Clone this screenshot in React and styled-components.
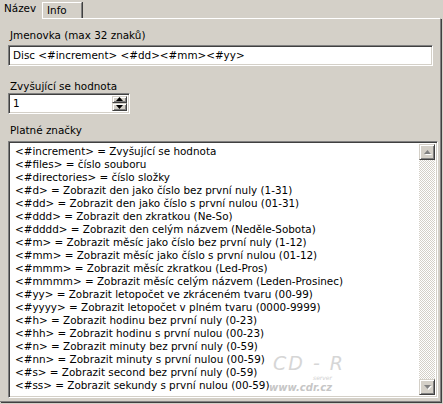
import React from "react";
import styled, { createGlobalStyle } from "styled-components";

const Global = createGlobalStyle`
  html, body { margin: 0; padding: 0; background: #d4d0c8; }
  body { font-family: Tahoma, "DejaVu Sans", sans-serif; font-size: 10.4px; color: #000; }
`;

const Window = styled.div`
  width: 443px;
  height: 404px;
  background: #d4d0c8;
  display: flex;
  flex-direction: column;
  overflow: hidden;
`;

const TabStrip = styled.div`
  display: flex;
  align-items: flex-end;
  height: 18px;
  flex: none;
  position: relative;
  z-index: 1;
`;

const Tab = styled.div`
  box-sizing: border-box;
  height: ${(p) => (p.$active ? 19 : 16)}px;
  margin-bottom: ${(p) => (p.$active ? -1 : 0)}px;
  padding: ${(p) => (p.$active ? "1px 6px 0 3px" : "1px 6px 0 4px")};
  background: #d4d0c8;
  line-height: 13px;
  border-top: 1px solid ${(p) => (p.$active ? "#d4d0c8" : "#fff")};
  border-left: 1px solid ${(p) => (p.$active ? "#d4d0c8" : "#fff")};
  border-right: ${(p) => (p.$active ? "1px solid #d4d0c8" : "1px solid #808080")};
  box-shadow: ${(p) => (p.$active ? "none" : "1px 0 0 #404040")};
  width: ${(p) => p.$w}px;
`;

const Panel = styled.div`
  flex: none;
  height: 384px;
  width: 441px;
  box-sizing: border-box;
  border-top: 1px solid #fff;
  border-right: 1px solid #808080;
  border-bottom: 1px solid #808080;
  box-shadow: 1px 1px 0 #404040;
  padding: 10px 0 0 8px;
  display: flex;
  flex-direction: column;
`;

const Label = styled.div`
  line-height: 13px;
  height: 13px;
  padding-left: 2px;
  margin-top: ${(p) => p.$mt || 0}px;
  margin-bottom: ${(p) => p.$mb ?? 3}px;
`;

const Sunken = styled.div`
  box-sizing: border-box;
  flex: none;
  background: #fff;
  border-style: solid;
  border-width: 1px;
  border-color: #808080 #fff #fff #808080;
  box-shadow: inset 1px 1px 0 #404040, inset -1px -1px 0 #d4d0c8;
`;

const TextField = styled(Sunken)`
  width: 425px;
  height: 21px;
  padding: 3px 4px;
  line-height: 13px;
  white-space: nowrap;
`;

const SpinBox = styled(Sunken)`
  width: 122px;
  height: 21px;
  display: flex;
  padding: 2px;
`;

const SpinValue = styled.div`
  flex: 1;
  padding: 1px 2px;
  line-height: 13px;
`;

const SpinButtons = styled.div`
  display: flex;
  flex-direction: column;
  width: 15px;
`;

const RaisedBtn = styled.div`
  box-sizing: border-box;
  background: #d4d0c8;
  border-style: solid;
  border-width: 1px;
  border-color: #d4d0c8 #404040 #404040 #d4d0c8;
  box-shadow: inset 1px 1px 0 #fff, inset -1px -1px 0 #808080;
  display: flex;
  align-items: center;
  justify-content: center;
  width: ${(p) => p.$w}px;
  height: ${(p) => p.$h}px;
`;

const ListBox = styled(Sunken)`
  width: 430px;
  height: 257px;
  display: flex;
  padding: 2px;
  position: relative;
`;

const ListItems = styled.div`
  flex: 1;
  padding: 1px 0 0 4px;
  overflow: hidden;
`;

const Item = styled.div`
  line-height: 13px;
  height: 13px;
  white-space: nowrap;
`;

const ScrollBar = styled.div`
  width: 16px;
  display: flex;
  flex-direction: column;
  justify-content: space-between;
  background-color: #fff;
  background-image: conic-gradient(#d4d0c8 25%, #fff 0 50%, #d4d0c8 0 75%, #fff 0);
  background-size: 2px 2px;
`;

const Watermark = styled.div`
  position: absolute;
  left: 252px;
  top: 210px;
  width: 90px;
  color: #c8c8c8;
  font-family: "DejaVu Sans", sans-serif;
  font-style: italic;
  pointer-events: none;
  opacity: 0.85;
`;

const WmBig = styled.div`
  font-size: 19px;
  line-height: 22px;
  letter-spacing: 2px;
  padding-left: 12px;
  color: #d0d0d0;
`;

const WmSmall = styled.div`
  font-size: 6px;
  line-height: 8px;
  padding-left: 52px;
`;

const WmUrl = styled.div`
  font-size: 10px;
  font-weight: bold;
  line-height: 12px;
  padding-left: 8px;
  color: #bdbdbd;
`;

const Arrow = ({ dir, color = "#000", shadow }) => (
  <svg width="7" height="5" viewBox="0 0 7 5" style={{ display: "block", overflow: "visible" }}>
    {shadow && (
      <polygon
        points={dir === "up" ? "3.5,0 0,4 7,4" : "0,0 7,0 3.5,4"}
        transform="translate(1,1)"
        fill="#fff"
      />
    )}
    <polygon points={dir === "up" ? "3.5,0 0,4 7,4" : "0,0 7,0 3.5,4"} fill={color} />
  </svg>
);

const items = [
  "<#increment> = Zvyšující se hodnota",
  "<#files> = číslo souboru",
  "<#directories> = číslo složky",
  "<#d> = Zobrazit den jako číslo bez první nuly (1-31)",
  "<#dd> = Zobrazit den jako číslo s první nulou (01-31)",
  "<#ddd> = Zobrazit den zkratkou (Ne-So)",
  "<#dddd> = Zobrazit den celým názvem (Neděle-Sobota)",
  "<#m> = Zobrazit měsíc jako číslo bez první nuly (1-12)",
  "<#mm> = Zobrazit měsíc jako číslo s první nulou (01-12)",
  "<#mmm> = Zobrazit měsíc zkratkou (Led-Pros)",
  "<#mmmm> = Zobrazit měsíc celým názvem (Leden-Prosinec)",
  "<#yy> = Zobrazit letopočet ve zkráceném tvaru (00-99)",
  "<#yyyy> = Zobrazit letopočet v plném tvaru (0000-9999)",
  "<#h> = Zobrazit hodinu bez první nuly (0-23)",
  "<#hh> = Zobrazit hodinu s první nulou (00-23)",
  "<#n> = Zobrazit minuty bez první nuly (0-59)",
  "<#nn> = Zobrazit minuty s první nulou (00-59)",
  "<#s> = Zobrazit second bez první nuly (0-59)",
  "<#ss> = Zobrazit sekundy s první nulou (00-59)",
];

export default function App() {
  return (
    <>
      <Global />
      <Window>
        <TabStrip>
          <Tab $active $w={42}>Název</Tab>
          <Tab $w={40}>Info</Tab>
        </TabStrip>
        <Panel>
          <Label>Jmenovka (max 32 znaků)</Label>
          <TextField>Disc &lt;#increment&gt; &lt;#dd&gt;&lt;#mm&gt;&lt;#yy&gt;</TextField>
          <Label $mt={14} $mb={0}>Zvyšující se hodnota</Label>
          <SpinBox>
            <SpinValue>1</SpinValue>
            <SpinButtons>
              <RaisedBtn $w={15} $h={8}>
                <Arrow dir="up" />
              </RaisedBtn>
              <RaisedBtn $w={15} $h={9}>
                <Arrow dir="down" />
              </RaisedBtn>
            </SpinButtons>
          </SpinBox>
          <Label $mt={10} $mb={4}>Platné značky</Label>
          <ListBox>
            <ListItems>
              {items.map((t) => (
                <Item key={t}>{t}</Item>
              ))}
            </ListItems>
            <ScrollBar>
              <RaisedBtn $w={16} $h={16}>
                <Arrow dir="up" color="#808080" shadow />
              </RaisedBtn>
              <RaisedBtn $w={16} $h={16}>
                <Arrow dir="down" color="#808080" shadow />
              </RaisedBtn>
            </ScrollBar>
            <Watermark>
              <WmBig>CD - R</WmBig>
              <WmSmall>server</WmSmall>
              <WmUrl>www.cdr.cz</WmUrl>
            </Watermark>
          </ListBox>
        </Panel>
      </Window>
    </>
  );
}
